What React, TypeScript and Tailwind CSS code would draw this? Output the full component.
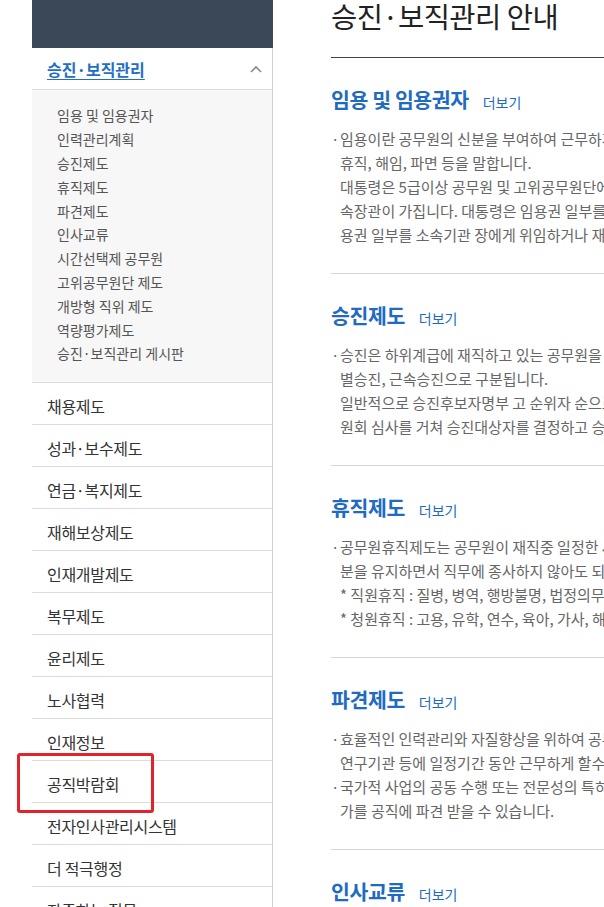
import React from "react";

const subItems = [
  "임용 및 임용권자",
  "인력관리계획",
  "승진제도",
  "휴직제도",
  "파견제도",
  "인사교류",
  "시간선택제 공무원",
  "고위공무원단 제도",
  "개방형 직위 제도",
  "역량평가제도",
  "승진·보직관리 게시판",
];

const menuItems = [
  "채용제도",
  "성과·보수제도",
  "연금·복지제도",
  "재해보상제도",
  "인재개발제도",
  "복무제도",
  "윤리제도",
  "노사협력",
  "인재정보",
  "공직박람회",
  "전자인사관리시스템",
  "더 적극행정",
  "자주하는 질문",
];

const sections: { title: string; lines: { text: string; bullet?: boolean }[] }[] = [
  {
    title: "임용 및 임용권자",
    lines: [
      { text: "임용이란 공무원의 신분을 부여하여 근무하게 하는 것으로 신규채용, 승진, 전보, 파견, 강임,", bullet: true },
      { text: "휴직, 해임, 파면 등을 말합니다." },
      { text: "대통령은 5급이상 공무원 및 고위공무원단에 속하는 일반직공무원의 임용권을 가지며, 6급이하는 소" },
      { text: "속장관이 가집니다. 대통령은 임용권 일부를 소속장관에게 위임할 수 있으며, 소속장관은 임" },
      { text: "용권 일부를 소속기관 장에게 위임하거나 재위임할 수 있습니다." },
    ],
  },
  {
    title: "승진제도",
    lines: [
      { text: "승진은 하위계급에 재직하고 있는 공무원을 상위계급으로 임용하는 것으로 일반승진, 특", bullet: true },
      { text: "별승진, 근속승진으로 구분됩니다." },
      { text: "일반적으로 승진후보자명부 고 순위자 순으로 승진임용하며, 5급 승진은 승진심사위" },
      { text: "원회 심사를 거쳐 승진대상자를 결정하고 승진시험을 통해 임용합니다." },
    ],
  },
  {
    title: "휴직제도",
    lines: [
      { text: "공무원휴직제도는 공무원이 재직중 일정한 사유로 직무에 종사할 수 없는 경우, 공무원 신", bullet: true },
      { text: "분을 유지하면서 직무에 종사하지 않아도 되는 제도입니다." },
      { text: "* 직원휴직 : 질병, 병역, 행방불명, 법정의무수행, 노조전임자" },
      { text: "* 청원휴직 : 고용, 유학, 연수, 육아, 가사, 해외동반, 자기개발" },
    ],
  },
  {
    title: "파견제도",
    lines: [
      { text: "효율적인 인력관리와 자질향상을 위하여 공무원을 다른 국가기관, 공공단체, 국내외", bullet: true },
      { text: "연구기관 등에 일정기간 동안 근무하게 할수 있습니다." },
      { text: "국가적 사업의 공동 수행 또는 전문성의 특히 요구되는 업무수행을 위하여 민간 전문", bullet: true },
      { text: "가를 공직에 파견 받을 수 있습니다." },
    ],
  },
];

function Chevron() {
  return (
    <svg width="12" height="8" viewBox="0 0 12 8" fill="none" stroke="#8a8a8a" strokeWidth="1.6">
      <path d="M1 7 L6 2 L11 7" />
    </svg>
  );
}

function Heading({ title }: { title: string }) {
  return (
    <div className="flex items-baseline gap-[14px] whitespace-nowrap">
      <h2 className="text-[20.5px] font-bold text-[#1f6bbf] tracking-[-0.4px] leading-[28px]">{title}</h2>
      <span className="text-[14px] text-[#1f6bbf]">더보기</span>
    </div>
  );
}

export default function App() {
  return (
    <div
      className="relative w-[604px] h-[907px] overflow-hidden bg-white flex"
      style={{ fontFamily: '"Noto Sans CJK KR", "Noto Sans", sans-serif' }}
    >
      {/* Sidebar */}
      <aside className="ml-[32px] w-[241px] shrink-0 border-r border-[#cfcfcf] flex flex-col">
        <div className="h-[48px] shrink-0 bg-[#3b4858] mr-[-1px]" />
        <div className="h-[42px] shrink-0 flex items-center justify-between pl-[15px] pr-[10px] border-b border-[#dcdcdc]">
          <span className="text-[16px] font-bold text-[#1f6fc5] underline underline-offset-[3px] leading-none">
            승진·보직관리
          </span>
          <Chevron />
        </div>
        <ul className="shrink-0 bg-[#f7f7f7] pt-[14px] pb-[16px] pl-[25px] border-b border-[#dcdcdc]">
          {subItems.map((s) => (
            <li key={s} className="h-[23.8px] flex items-center text-[14px] text-[#555]">
              {s}
            </li>
          ))}
        </ul>
        {menuItems.map((m) => (
          <div
            key={m}
            className="h-[42px] shrink-0 flex items-center pl-[15px] pt-[5px] border-b border-[#dcdcdc] text-[16px] text-[#333] tracking-[-0.3px]"
          >
            {m}
          </div>
        ))}
      </aside>

      {/* Content */}
      <main className="ml-[58px] flex-1 min-w-0 flex flex-col">
        <h1 className="h-[58px] shrink-0 text-[28.5px] leading-[32px] text-[#222] tracking-[-0.5px] border-b border-[#444] whitespace-nowrap">
          승진·보직관리 안내
        </h1>
        {sections.map((sec) => (
          <section key={sec.title} className="shrink-0 pt-[27px] pb-[26px] border-b border-[#d6d6d6]">
            <Heading title={sec.title} />
            <div className="mt-[14px] text-[15px] leading-[24px] text-[#666]">
              {sec.lines.map((l, k) => (
                <p key={k} className="whitespace-nowrap pl-[9px] relative">
                  {l.bullet && <span className="absolute left-0 top-0">·</span>}
                  {l.text}
                </p>
              ))}
            </div>
          </section>
        ))}
        <section className="shrink-0 pt-[27px]">
          <Heading title="인사교류" />
        </section>
      </main>

      {/* Red highlight box */}
      <div className="absolute left-[17px] top-[753px] w-[137px] h-[60px] border-[3px] border-[#e0242b] rounded-[3px] pointer-events-none" />
    </div>
  );
}
